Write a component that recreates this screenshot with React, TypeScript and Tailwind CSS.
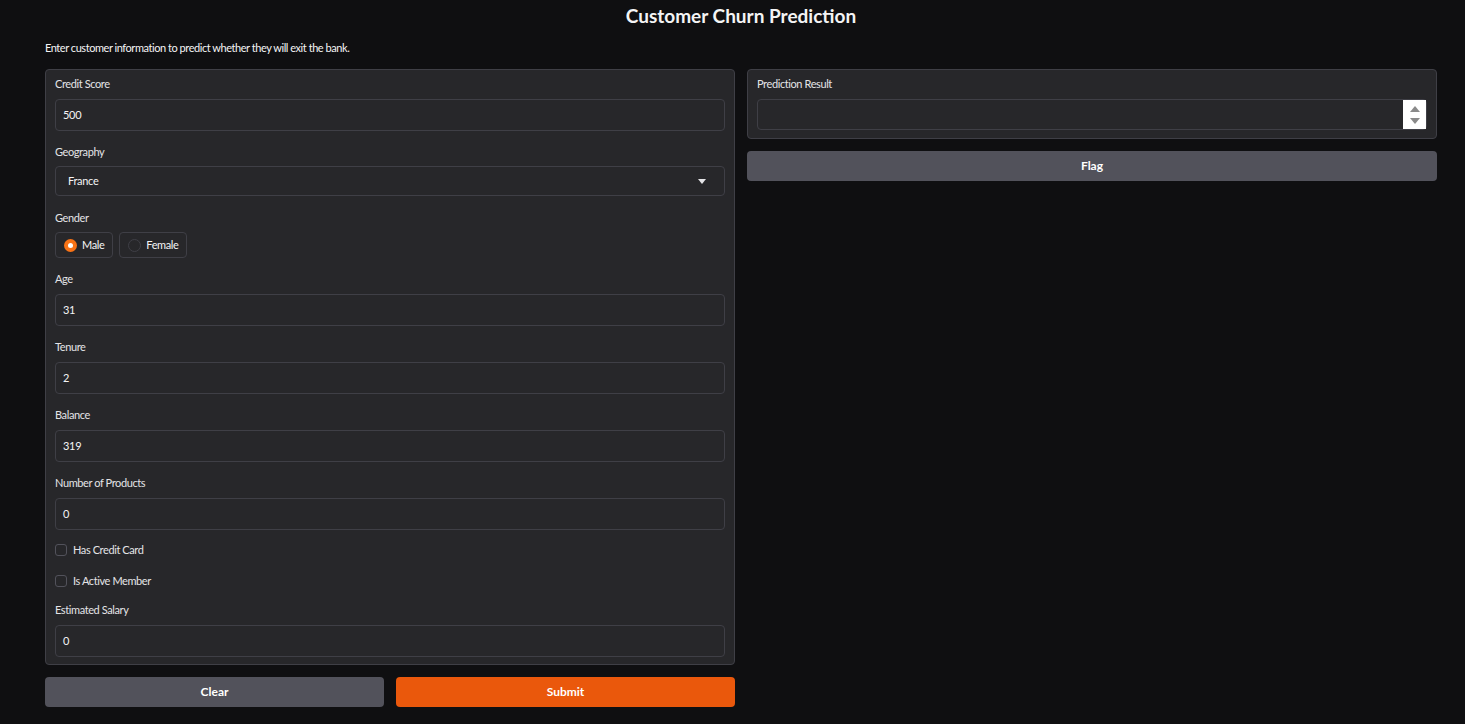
import React, { useState } from 'react'

const Label = ({ children }: { children: React.ReactNode }) => (
    <span className='block text-[11px] leading-[14px] tracking-[-0.4px] text-[#e4e4e7]'>{children}</span>
)

const Field = ({ label, value }: { label: string; value: string }) => (
    <div className='flex flex-col gap-[8px]'>
        <Label>{label}</Label>
        <div className='h-[32px] rounded-[4px] border border-[#3f3f46] bg-[#27272a] px-[7px] flex items-center text-[11px] tracking-[-0.3px] text-[#f4f4f5]'>
            {value}
        </div>
    </div>
)

const Check = ({ label }: { label: string }) => (
    <div className='flex items-center gap-[6px] h-[16px]'>
        <span className='w-[12px] h-[12px] rounded-[3px] border border-[#52525b] bg-[#27272a]' />
        <span className='text-[11px] tracking-[-0.4px] text-[#e4e4e7]'>{label}</span>
    </div>
)

const App = () => {
    const [gender, setGender] = useState('Male')

    return (
        <div
            className='min-h-[724px] bg-[#0f0f11] text-white pl-[45px] pr-[28px]'
            style={{ fontFamily: 'Lato, "Open Sans", sans-serif' }}
        >
            <h1 className='text-center text-[19px] font-bold leading-[32px] text-[#f4f4f5]'>
                Customer Churn Prediction
            </h1>
            <p className='mt-[9px] text-[11px] leading-[14px] tracking-[-0.45px] text-[#f4f4f5]'>
                Enter customer information to predict whether they will exit the bank.
            </p>

            <div className='mt-[14px] grid grid-cols-2 gap-[12px] items-start'>
                <div className='flex flex-col gap-[12px]'>
                    <div className='rounded-[4px] border border-[#3f3f46] bg-[#27272a] px-[9px] pt-[7px] pb-[7px] flex flex-col gap-[14px]'>
                        <Field label='Credit Score' value='500' />
                        <div className='flex flex-col gap-[7px]'>
                            <Label>Geography</Label>
                            <div className='h-[30px] rounded-[4px] border border-[#3f3f46] bg-[#27272a] pl-[12px] pr-[18px] flex items-center justify-between text-[11px] tracking-[-0.3px] text-[#f4f4f5]'>
                                <span>France</span>
                                <svg width='8' height='5' viewBox='0 0 8 5'>
                                    <path d='M0 0h8L4 5z' fill='#e4e4e7' />
                                </svg>
                            </div>
                        </div>
                        <div className='flex flex-col gap-[8px] mt-[1px]'>
                            <Label>Gender</Label>
                            <div className='flex gap-[6px] -mt-[1px]'>
                                {['Male', 'Female'].map((g) => (
                                    <button
                                        key={g}
                                        onClick={() => setGender(g)}
                                        className='h-[26px] rounded-[4px] border border-[#3f3f46] bg-[#27272a] pl-[8px] pr-[8px] flex items-center gap-[5px] text-[11px] tracking-[-0.4px] text-[#f4f4f5]'
                                    >
                                        {gender == g ? (
                                            <span className='w-[13px] h-[13px] rounded-full bg-[#f97316] flex items-center justify-center'>
                                                <span className='w-[5px] h-[5px] rounded-full bg-white' />
                                            </span>
                                        ) : (
                                            <span className='w-[13px] h-[13px] rounded-full border border-[#3f3f46] bg-[#27272a]' />
                                        )}
                                        {g}
                                    </button>
                                ))}
                            </div>
                        </div>
                        <Field label='Age' value='31' />
                        <Field label='Tenure' value='2' />
                        <Field label='Balance' value='319' />
                        <Field label='Number of Products' value='0' />
                        <div className='flex flex-col gap-[15px] -mt-[2px]'>
                            <Check label='Has Credit Card' />
                            <Check label='Is Active Member' />
                        </div>
                        <Field label='Estimated Salary' value='0' />
                    </div>
                    <div className='grid grid-cols-2 gap-[12px]'>
                        <button className='h-[30px] rounded-[4px] bg-[#52525b] text-[12px] font-bold text-white'>Clear</button>
                        <button className='h-[30px] rounded-[4px] bg-[#ea580c] text-[12px] font-bold text-white'>Submit</button>
                    </div>
                </div>

                <div className='flex flex-col gap-[12px]'>
                    <div className='rounded-[4px] border border-[#3f3f46] bg-[#27272a] px-[9px] pt-[7px] pb-[8px] flex flex-col gap-[8px]'>
                        <Label>Prediction Result</Label>
                        <div className='h-[31px] rounded-[4px] border border-[#3f3f46] bg-[#27272a] flex justify-end'>
                            <div className='w-[23px] h-full bg-white flex flex-col items-center justify-center gap-[6px]'>
                                <svg width='10' height='6' viewBox='0 0 10 6'>
                                    <path d='M5 0L10 6H0z' fill='#8a8a8a' />
                                </svg>
                                <svg width='10' height='6' viewBox='0 0 10 6'>
                                    <path d='M0 0h10L5 6z' fill='#8a8a8a' />
                                </svg>
                            </div>
                        </div>
                    </div>
                    <button className='h-[30px] rounded-[4px] bg-[#52525b] text-[12px] font-bold text-white'>Flag</button>
                </div>
            </div>
        </div>
    )
}

export default App
